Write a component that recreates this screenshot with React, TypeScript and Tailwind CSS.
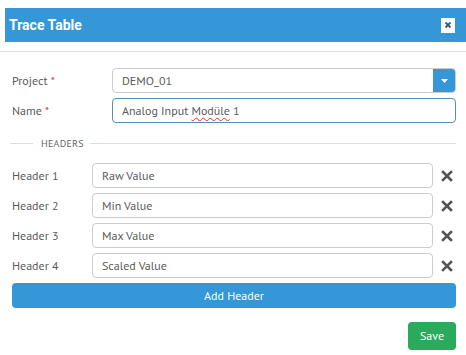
import React from "react";

const font = { fontFamily: '"PT Sans", "Open Sans", "Noto Sans", sans-serif' };

function XIcon() {
  return (
    <svg width="12" height="12" viewBox="0 0 12 12">
      <path d="M2 2 L10 10 M10 2 L2 10" stroke="#555" strokeWidth="2.6" strokeLinecap="square" />
    </svg>
  );
}

function HeaderRow({ label, value }: { label: string; value: string }) {
  return (
    <div className="flex items-center h-[25px]">
      <div className="w-[80px] text-[12px] text-[#5a5a5a]">{label}</div>
      <div className="w-[341px] h-[25px] border border-[#ccc] rounded-[4px] flex items-center pl-[9px] text-[12px] text-[#5a5a5a]">
        {value}
      </div>
      <div className="ml-[8px] flex items-center">
        <XIcon />
      </div>
    </div>
  );
}

export default function App() {
  return (
    <div className="w-[466px] h-[355px] bg-white overflow-hidden" style={font}>
      <div className="ml-[5px] mt-[8px] h-[34px] bg-[#3597d8] flex items-center justify-between pl-[4px] pr-[11px]">
        <div className="text-white font-bold text-[14px]" style={{ fontFamily: "Roboto, sans-serif" }}>
          Trace Table
        </div>
        <div className="w-[14px] h-[15px] bg-white flex items-center justify-center">
          <svg width="8" height="8" viewBox="0 0 8 8">
            <path d="M1.5 1.5 L6.5 6.5 M6.5 1.5 L1.5 6.5" stroke="#3a5a7a" strokeWidth="1.8" />
          </svg>
        </div>
      </div>
      <div className="mt-[9px] h-px bg-[#dedede]" />
      <div className="px-[12px] pt-[16px] pr-[10px]">
        <div className="flex items-center h-[25px]">
          <div className="w-[100px] text-[12px] text-[#5a5a5a]">
            Project <span className="text-[#d9352c]">*</span>
          </div>
          <div className="flex-1 h-[25px] border border-[#ccc] rounded-[4px] flex items-center overflow-hidden">
            <div className="flex-1 pl-[9px] text-[12px] text-[#5a5a5a]">DEMO_01</div>
            <div className="w-[23px] h-[25px] bg-[#3597d8] flex items-center justify-center -mr-px">
              <svg width="7" height="4" viewBox="0 0 7 4">
                <path d="M0 0 L7 0 L3.5 4 Z" fill="white" />
              </svg>
            </div>
          </div>
        </div>
        <div className="flex items-center h-[25px] mt-[5px]">
          <div className="w-[100px] text-[12px] text-[#5a5a5a]">
            Name <span className="text-[#d9352c]">*</span>
          </div>
          <div className="flex-1 h-[25px] border border-[#5a8db0] rounded-[4px] flex items-center pl-[9px] text-[12px] text-[#5a5a5a]">
            Analog Input&nbsp;
            <span className="underline decoration-wavy decoration-[#e03030] decoration-1 underline-offset-2">Modüle</span>
            &nbsp;1
          </div>
        </div>
        <div className="flex items-center h-[12px] mt-[14px] -ml-[2px]">
          <div className="w-[23px] h-px bg-[#ddd]" />
          <div className="ml-[8px] text-[10px] text-[#666] tracking-wide">HEADERS</div>
          <div className="ml-[6px] flex-1 h-px bg-[#ddd]" />
        </div>
        <div className="mt-[14px] flex flex-col gap-[5px]">
          <HeaderRow label="Header 1" value="Raw Value" />
          <HeaderRow label="Header 2" value="Min Value" />
          <HeaderRow label="Header 3" value="Max Value" />
          <HeaderRow label="Header 4" value="Scaled Value" />
        </div>
        <div className="mt-[5px] h-[25px] bg-[#3597d8] rounded-[4px] flex items-center justify-center text-white text-[12px]">
          Add Header
        </div>
        <div className="mt-[14px] flex justify-end">
          <div className="w-[48px] h-[28px] bg-[#2baa5e] rounded-[4px] flex items-center justify-center text-white text-[12px]">
            Save
          </div>
        </div>
      </div>
    </div>
  );
}
